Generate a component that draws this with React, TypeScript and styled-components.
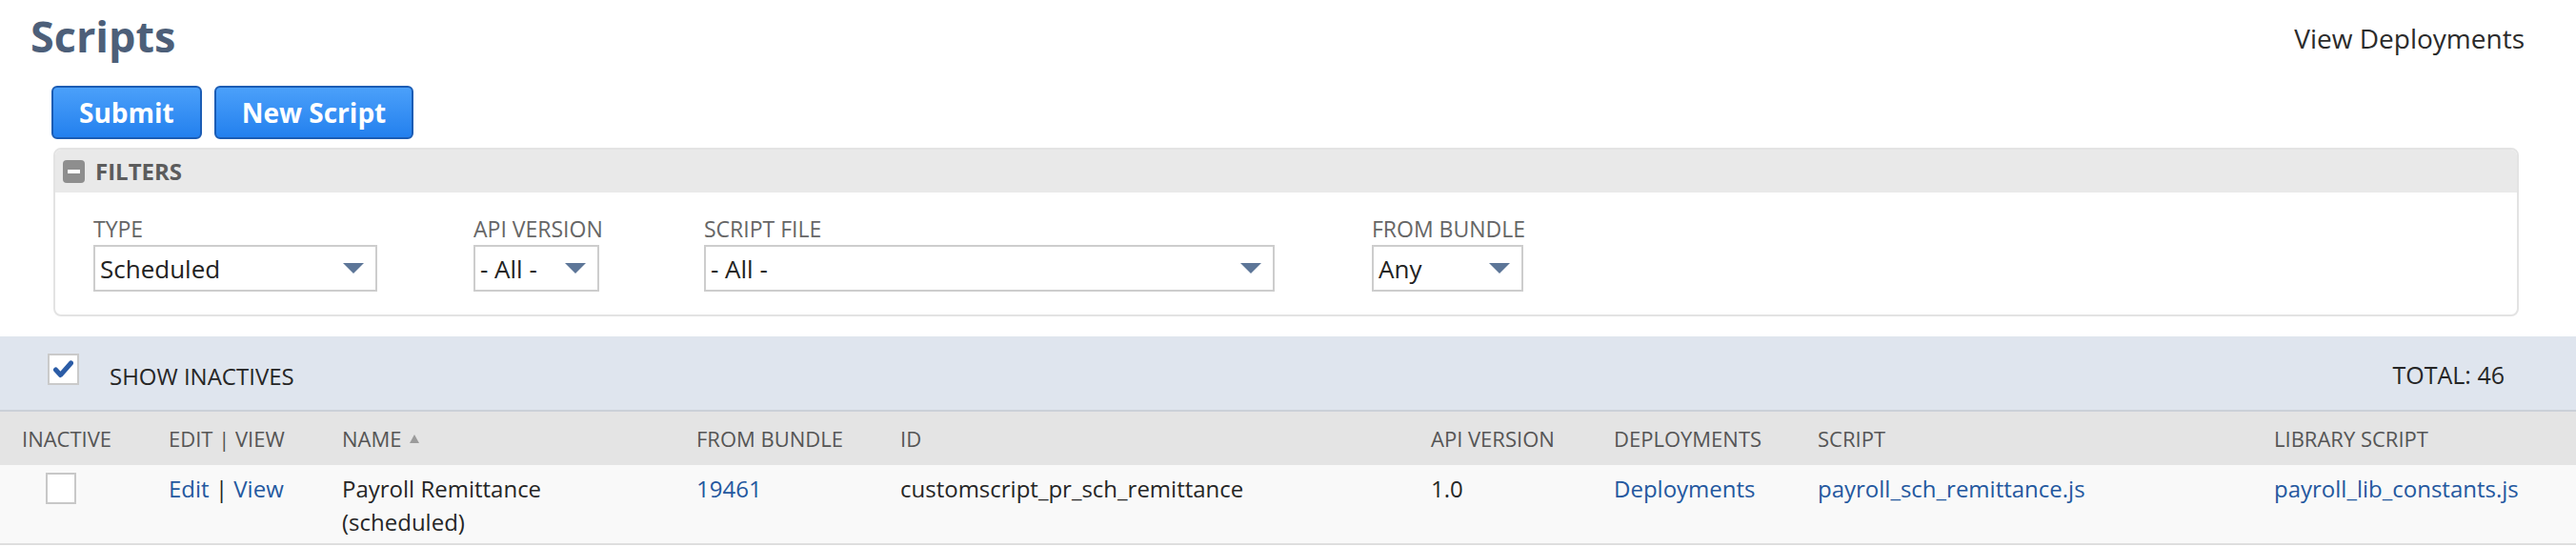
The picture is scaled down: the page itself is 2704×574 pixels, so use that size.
import React from 'react';
import styled, { createGlobalStyle } from 'styled-components';

const GlobalStyle = createGlobalStyle`
  html, body {
    margin: 0;
    padding: 0;
    background: #fff;
  }
  body {
    font-family: 'Open Sans', 'Liberation Sans', sans-serif;
    color: #262626;
  }
  * {
    box-sizing: border-box;
  }
`;

const filters = [
  { label: 'Type', value: 'Scheduled', col: 399, width: 298 },
  { label: 'API Version', value: '- All -', col: 242, width: 132 },
  { label: 'Script File', value: '- All -', col: 701, width: 599 },
  { label: 'From Bundle', value: 'Any', col: 0, width: 159 },
];

const columns = [
  'Inactive',
  'Edit | View',
  'Name',
  'From Bundle',
  'ID',
  'API Version',
  'Deployments',
  'Script',
  'Library Script',
];

const CheckMark = () => (
  <svg width="21" height="19" viewBox="0 0 21 19">
    <path d="M2.5 10 L7.5 15.5 L18.5 3" fill="none" stroke="#2b5ca6" strokeWidth="5" strokeLinejoin="round" strokeLinecap="round" />
  </svg>
);

export default function App() {
  return (
    <>
      <GlobalStyle />
      <Page>
        <PageHeader>
          <Title>Scripts</Title>
          <HeaderLink href="#">View Deployments</HeaderLink>
        </PageHeader>

        <ButtonBar>
          <Button>Submit</Button>
          <Button>New Script</Button>
        </ButtonBar>

        <FilterPanel>
          <PanelHeader>
            <Collapse />
            <PanelTitle>Filters</PanelTitle>
          </PanelHeader>
          <FilterBody>
            {filters.map((f) => (
              <Field key={f.label} $col={f.col}>
                <FieldLabel>{f.label}</FieldLabel>
                <Select $width={f.width}>
                  <span>{f.value}</span>
                  <Arrow />
                </Select>
              </Field>
            ))}
          </FilterBody>
        </FilterPanel>

        <Band>
          <ShowInactive>
            <Checkbox>
              <CheckMark />
            </Checkbox>
            <BandLabel>Show Inactives</BandLabel>
          </ShowInactive>
          <Total>TOTAL: 46</Total>
        </Band>

        <HeaderRow>
          {columns.map((c) => (
            <HeadCell key={c}>
              {c}
              {c === 'Name' && <SortUp />}
            </HeadCell>
          ))}
        </HeaderRow>

        <DataRow>
          <Cell>
            <RowCheckbox />
          </Cell>
          <Cell>
            <Link href="#">Edit</Link> | <Link href="#">View</Link>
          </Cell>
          <NameCell>Payroll Remittance (scheduled)</NameCell>
          <Cell>
            <Link href="#">19461</Link>
          </Cell>
          <Cell>customscript_pr_sch_remittance</Cell>
          <Cell>1.0</Cell>
          <Cell>
            <Link href="#">Deployments</Link>
          </Cell>
          <Cell>
            <Link href="#">payroll_sch_remittance.js</Link>
          </Cell>
          <Cell>
            <Link href="#">payroll_lib_constants.js</Link>
          </Cell>
        </DataRow>
      </Page>
    </>
  );
}

const Page = styled.main`
  width: 2704px;
`;

const PageHeader = styled.header`
  display: flex;
  justify-content: space-between;
  align-items: flex-start;
  padding: 6px 54px 0 32px;
`;

const Title = styled.h1`
  margin: 0;
  font-size: 45px;
  line-height: 64px;
  font-weight: 700;
  color: #4d5f79;
`;

const HeaderLink = styled.a`
  margin-top: 15px;
  font-size: 28px;
  line-height: 38px;
  color: #2b2b2b;
  text-decoration: none;
`;

const ButtonBar = styled.div`
  display: flex;
  gap: 13px;
  padding: 20px 0 0 54px;
`;

const Button = styled.button`
  height: 56px;
  padding: 0 27px;
  border: 2px solid #1b5cb4;
  border-radius: 6px;
  background: linear-gradient(#4ba0fa, #2380ee);
  color: #fff;
  font-family: inherit;
  font-size: 28px;
  font-weight: 700;
  line-height: 1;
`;

const FilterPanel = styled.section`
  margin: 9px 60px 0 56px;
  border: 2px solid #e3e3e3;
  border-radius: 8px;
  overflow: hidden;
`;

const PanelHeader = styled.div`
  display: flex;
  align-items: center;
  gap: 11px;
  height: 45px;
  padding-left: 8px;
  background: #e9e9e9;
`;

const Collapse = styled.span`
  position: relative;
  width: 23px;
  height: 24px;
  border-radius: 4px;
  background: #8e8e8e;

  &::after {
    content: '';
    position: absolute;
    left: 5px;
    right: 5px;
    top: 10px;
    height: 4px;
    background: #fff;
  }
`;

const PanelTitle = styled.span`
  font-size: 24px;
  font-weight: 700;
  color: #5c5c5c;
  text-transform: uppercase;
`;

const FilterBody = styled.div`
  display: flex;
  padding: 23px 40px 24px 40px;
`;

const Field = styled.div<{ $col: number }>`
  display: flex;
  flex-direction: column;
  ${({ $col }) => ($col ? `width: ${$col}px;` : '')}
`;

const FieldLabel = styled.label`
  font-size: 23px;
  line-height: 30px;
  color: #666;
  text-transform: uppercase;
  margin-bottom: 2px;
`;

const Select = styled.div<{ $width: number }>`
  display: flex;
  align-items: center;
  justify-content: space-between;
  width: ${({ $width }) => $width}px;
  height: 49px;
  border: 2px solid #cdcdcd;
  padding: 0 12px 0 5px;
  font-size: 26px;
  color: #222;
  background: #fff;
`;

const Arrow = styled.span`
  width: 0;
  height: 0;
  border-left: 11.5px solid transparent;
  border-right: 11.5px solid transparent;
  border-top: 11px solid #5d7698;
`;

const Band = styled.div`
  display: flex;
  justify-content: space-between;
  align-items: flex-start;
  height: 79px;
  margin-top: 21px;
  padding: 18px 75px 0 50px;
  background: #dfe5ee;
  border-bottom: 2px solid #cbd0d8;
`;

const ShowInactive = styled.div`
  display: flex;
  align-items: flex-start;
  gap: 32px;
`;

const Checkbox = styled.span`
  display: inline-flex;
  align-items: center;
  justify-content: center;
  width: 33px;
  height: 33px;
  border: 2px solid #cacaca;
  background: #fff;
`;

const BandLabel = styled.span`
  margin-top: 8px;
  font-size: 24px;
  line-height: 32px;
  color: #262626;
  text-transform: uppercase;
`;

const Total = styled.span`
  margin-top: 6px;
  font-size: 25px;
  line-height: 32px;
  color: #262626;
`;

const gridCols = '154px 182px 372px 214px 557px 192px 214px 479px 1fr';

const HeaderRow = styled.div`
  display: grid;
  grid-template-columns: ${gridCols};
  align-items: center;
  height: 56px;
  padding-left: 23px;
  background: #e4e4e4;
`;

const HeadCell = styled.div`
  display: flex;
  align-items: center;
  font-size: 22px;
  color: #555;
  text-transform: uppercase;
  white-space: nowrap;
`;

const SortUp = styled.span`
  margin-left: 8px;
  width: 0;
  height: 0;
  border-left: 5.5px solid transparent;
  border-right: 5.5px solid transparent;
  border-bottom: 9px solid #9b9b9b;
`;

const DataRow = styled.div`
  display: grid;
  grid-template-columns: ${gridCols};
  align-items: start;
  padding: 7px 0 5px 23px;
  background: #f9f9f9;
  border-bottom: 2px solid #dedede;
  font-size: 24px;
  line-height: 35px;
  color: #262626;
`;

const Cell = styled.div`
  white-space: nowrap;
`;

const NameCell = styled.div`
  max-width: 290px;
`;

const RowCheckbox = styled.span`
  display: block;
  width: 32px;
  height: 33px;
  margin: 1px 0 0 25px;
  border: 2px solid #c8c8c8;
  background: #fff;
`;

const Link = styled.a`
  color: #24589f;
  text-decoration: none;
`;
